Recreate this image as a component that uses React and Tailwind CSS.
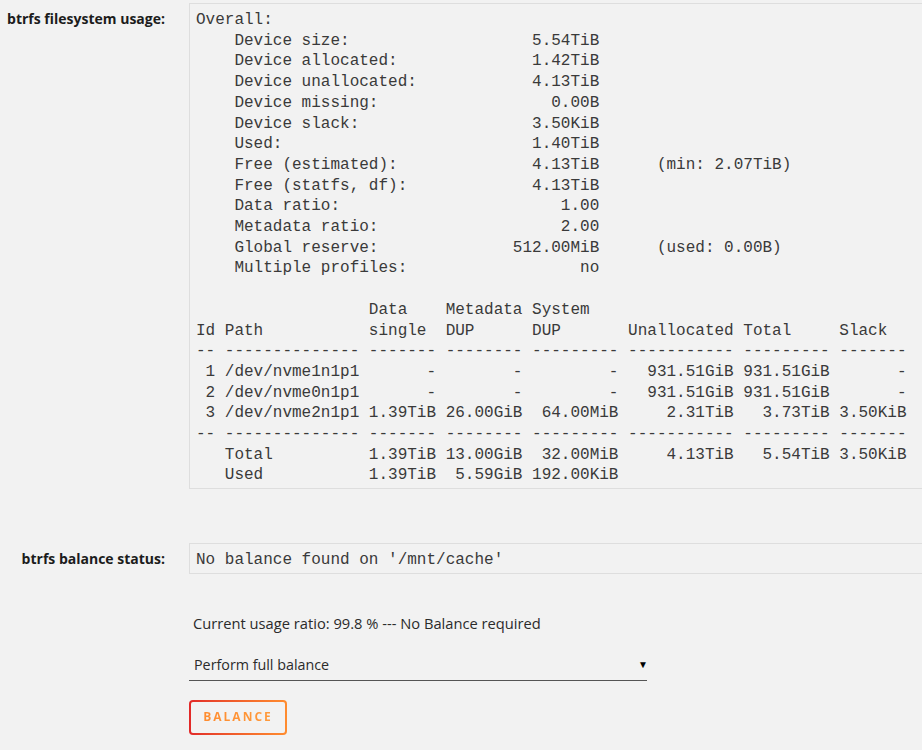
import React from 'react';

const mono = { fontFamily: '"Liberation Mono", "DejaVu Sans Mono", monospace' };

const pad = (s, n) => s.padEnd(n, ' ');
const right = (s, n) => s.padStart(n, ' ');

// overall summary lines, value right-aligned to column 42
const overall = [
  ['Device size:', '5.54TiB'],
  ['Device allocated:', '1.42TiB'],
  ['Device unallocated:', '4.13TiB'],
  ['Device missing:', '0.00B'],
  ['Device slack:', '3.50KiB'],
  ['Used:', '1.40TiB'],
  ['Free (estimated):', '4.13TiB', '(min: 2.07TiB)'],
  ['Free (statfs, df):', '4.13TiB'],
  ['Data ratio:', '1.00'],
  ['Metadata ratio:', '2.00'],
  ['Global reserve:', '512.00MiB', '(used: 0.00B)'],
  ['Multiple profiles:', 'no'],
];

const widths = [2, 14, 7, 8, 9, 11, 9, 7];
const row = (cells) =>
  cells
    .map((c, i) => (i === 1 ? pad(c, widths[i]) : right(c, widths[i])))
    .join(' ')
    .replace(/\s+$/, '');
const dashes = widths.map((w) => '-'.repeat(w)).join(' ');

const usageText = [
  'Overall:',
  ...overall.map(([k, v, extra]) => {
    const line = pad('    ' + k, 42 - v.length) + v;
    return extra ? pad(line, 48) + extra : line;
  }),
  '',
  pad('', 18) + 'Data    Metadata System',
  'Id Path           single  DUP      DUP       Unallocated Total     Slack',
  dashes,
  row(['1', '/dev/nvme1n1p1', '-', '-', '-', '931.51GiB', '931.51GiB', '-']),
  row(['2', '/dev/nvme0n1p1', '-', '-', '-', '931.51GiB', '931.51GiB', '-']),
  row(['3', '/dev/nvme2n1p1', '1.39TiB', '26.00GiB', '64.00MiB', '2.31TiB', '3.73TiB', '3.50KiB']),
  dashes,
  row(['', 'Total', '1.39TiB', '13.00GiB', '32.00MiB', '4.13TiB', '5.54TiB', '3.50KiB']),
  row(['', 'Used', '1.39TiB', '5.59GiB', '192.00KiB']),
].join('\n');

function Label({ children }) {
  return (
    <div className="w-[189px] shrink-0 pr-6 pt-[6px] text-right text-[14px] font-bold leading-5 text-[#1c1c1c]">
      {children}
    </div>
  );
}

function Pre({ children }) {
  return (
    <pre
      className="-mr-px flex-1 whitespace-pre border border-[#dedede] bg-[#f2f2f2] pt-[6px] pb-[2px] pl-[6px] text-[16px] leading-[20.7px] text-[#3a3a3a]"
      style={mono}
    >
      {children}
    </pre>
  );
}

export default function App() {
  return (
    <div
      className="min-h-screen w-full overflow-hidden bg-[#f2f2f2] pt-[3px] text-[#333]"
      style={{ fontFamily: '"Open Sans", "Noto Sans", sans-serif' }}
    >
      {/* filesystem usage */}
      <div className="flex">
        <Label>btrfs filesystem usage:</Label>
        <Pre>{usageText}</Pre>
      </div>

      {/* balance status */}
      <div className="mt-[54px] flex">
        <Label>btrfs balance status:</Label>
        <Pre>No balance found on '/mnt/cache'</Pre>
      </div>

      <div className="flex">
        <div className="w-[189px] shrink-0" />
        <div className="flex flex-col pt-[39px]">
          <p className="pl-1 text-[14.7px] leading-5 text-[#2b2b2b]">
            Current usage ratio: 99.8 % --- No Balance required
          </p>

          <div className="relative mt-[16px] flex h-[32px] w-[458px] items-center border-b border-[#555] pl-[5px] text-[14.3px] text-[#2b2b2b]">
            Perform full balance
            <span className="absolute right-[-1px] top-[8px] text-[10px] text-black">▼</span>
          </div>

          <div className="mt-[19px] w-[98px] rounded-[4px] bg-linear-to-r from-[#e22828] to-[#ff8c2f] p-[2px]">
            <button className="flex h-[31px] w-full items-center justify-center rounded-[2px] bg-[#f2f2f2]">
              <span className="bg-linear-to-r from-[#ff8c2f] to-[#ff9a3c] bg-clip-text text-[12px] font-bold tracking-[2px] text-transparent">
                BALANCE
              </span>
            </button>
          </div>
        </div>
      </div>
    </div>
  );
}
